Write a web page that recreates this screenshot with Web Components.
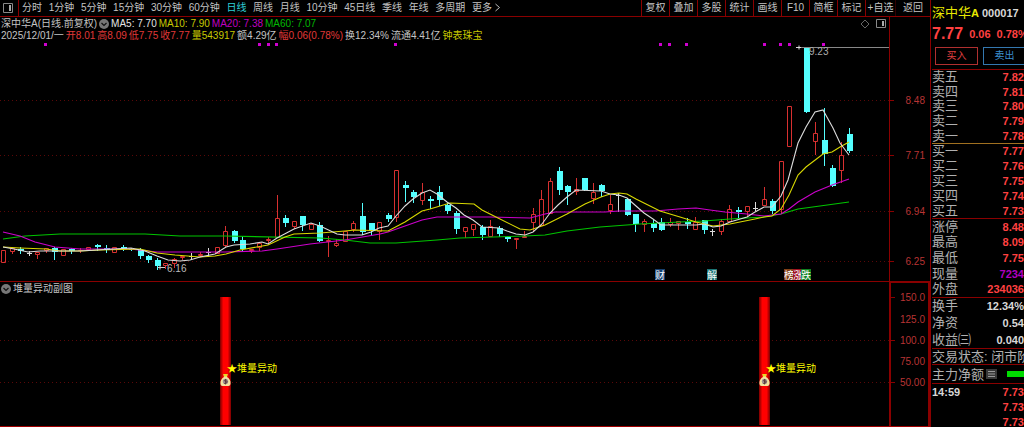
<!DOCTYPE html>
<html lang="zh-CN">
<head>
<meta charset="utf-8">
<title>深中华A 日线</title>
<style>
html,body{height:100%;margin:0;background:#000}
body{color:#c4c4c4;font:10px/12px "Liberation Sans","Noto Sans CJK SC",sans-serif;overflow:hidden}
</style>
</head>
<body>
<stock-app></stock-app>
<script>
const define = (name, html, setup) => customElements.define(name, class extends HTMLElement {
  connectedCallback() {
    if (this.shadowRoot) return;
    const t = document.createElement('template');
    t.innerHTML = html;
    this.attachShadow({mode: 'open'}).append(t.content.cloneNode(true));
    if (setup) setup(this, this.shadowRoot);
  }
});

/* ---------- toolbar ---------- */
define('period-tab', `<style>
:host{display:block}
button{all:unset;display:block;white-space:nowrap;cursor:pointer;color:inherit}
:host([active]){color:#2fd0d8}
</style><button type="button"><slot></slot></button>`);

define('tool-button', `<style>
:host{display:block;box-sizing:border-box;width:28px;border-left:1px solid #8a0000}
:host([wide]){width:30px}
:host([last]){width:35px;border-left-color:#300}
button{all:unset;display:block;width:100%;line-height:16px;text-align:center;white-space:nowrap;cursor:pointer}
</style><button type="button"><slot></slot></button>`);

define('top-bar', `<style>
:host{display:flex;justify-content:space-between;height:16px;line-height:16px;border-bottom:1px solid #8a0000}
.left,.right{display:flex}
.left{flex:0 1 500px}
.toggle{all:unset;box-sizing:border-box;display:flex;align-items:center;width:19px;flex:none;padding-left:3px;border-right:1px solid #8a0000}
nav{display:flex;justify-content:space-between;flex:1;padding-left:3px}
period-tab svg{vertical-align:-1px;margin-left:3px}
</style>
<div class="left"><button class="toggle" type="button" aria-label="侧栏"><svg width="11" height="10"><path d="M.5.5h9v9h-9z" fill="none" stroke="#888"/><path d="M6 2h2v6H6z" fill="#aaa"/></svg></button>
<nav><period-tab>分时</period-tab><period-tab>1分钟</period-tab><period-tab>5分钟</period-tab><period-tab>15分钟</period-tab><period-tab>30分钟</period-tab><period-tab>60分钟</period-tab><period-tab active>日线</period-tab><period-tab>周线</period-tab><period-tab>月线</period-tab><period-tab>10分钟</period-tab><period-tab>45日线</period-tab><period-tab>季线</period-tab><period-tab>年线</period-tab><period-tab>多周期</period-tab><period-tab>更多<svg width="5" height="9"><path d="M.5 1l4 3.500-4 3.500" fill="none" stroke="#bbb"/></svg></period-tab></nav></div>
<div class="right"><tool-button>复权</tool-button><tool-button>叠加</tool-button><tool-button>多股</tool-button><tool-button>统计</tool-button><tool-button>画线</tool-button><tool-button>F10</tool-button><tool-button>简框</tool-button><tool-button>标记</tool-button><tool-button wide>+自选</tool-button><tool-button last>返回</tool-button></div>`);

/* ---------- shared pieces ---------- */
define('round-toggle', `<style>:host{display:block;line-height:0}button{all:unset;display:block}</style>
<button type="button" aria-label="展开"><svg width="10" height="10"><circle cx="5" cy="5" r="5" fill="#777"/><path d="M2.500 4L5 6.500 7.500 4" fill="none" stroke="#111" stroke-width="1.200"/></svg></button>`);

define('value-axis', `<style>
:host{display:block;box-sizing:border-box;border-left:1px solid #8a0000;overflow:hidden}
:host([framed]){border:2px solid #8a0000;border-top-width:1px;border-bottom:0}
svg{display:block;width:100%;height:100%}
text{fill:#b83434}
</style><svg></svg>`, (el, root) => {
  const top = +el.getAttribute('top'), x = el.hasAttribute('framed') ? 34 : 35;
  root.querySelector('svg').innerHTML = el.getAttribute('marks').split(',').map(m => {
    const [label, y, tick] = m.split(':');
    return (tick ? `<path d="M0 ${y - top + .5}h4" stroke="#8a0000"/>` : '') +
      `<text x="${x}" y="${y - top + 4}" text-anchor="end">${label}</text>`;
  }).join('');
});

/* ---------- candles: [kind, high, top, bottom, low] ---------- */
const CANDLES = `r 250 250 262 262|r 247 248 251 253|c 247 249 251 253|w 251 253 253 255|r 252 252 254 258|r 248 248 250 252|c 247 248 252 259|r 249 249 255 255|c 248 249 251 253|r 248 250 250 252|r 247 247 249 249|c 244 245 247 250|c 245 248 250 252|r 247 247 252 252|c 245 247 249 250|c 248 249 250 250|c 248 250 256 258|c 255 256 260 262|c 258 260 266 269|r 263 263 265 268|r 258 259 263 267|r 256 256 257 259|w 253 256 256 259|r 252 254 255 256|w 248 252 252 256|r 247 247 253 253|r 226 231 245 246|c 230 231 241 242|c 236 240 249 251|r 249 249 250 252|r 243 243 247 250|r 237 239 240 242|r 195 218 237 237|c 215 218 223 226|r 221 221 226 228|c 216 216 225 230|r 223 224 229 229|c 222 225 241 241|r 236 240 241 256|r 239 243 245 246|r 231 231 241 241|r 221 223 229 231|c 203 216 232 234|c 223 223 231 235|r 222 222 231 239|c 213 215 219 221|r 170 170 217 221|c 181 185 188 201|c 190 192 197 202|r 183 192 200 204|c 196 199 201 208|c 186 192 200 205|c 203 205 211 213|c 211 213 229 233|r 227 227 231 237|r 224 224 229 235|c 225 227 235 239|r 220 226 236 236|c 226 228 234 236|c 236 237 239 241|r 238 238 239 248|r 231 236 237 237|r 208 214 222 231|r 190 199 225 225|r 178 181 213 213|c 167 171 190 194|c 185 186 192 204|r 178 189 191 194|c 178 178 190 190|r 183 192 198 203|c 184 185 191 196|r 195 204 210 213|w 193 195 195 211|c 199 199 215 215|c 214 214 224 231|r 219 221 224 231|c 220 223 228 231|c 218 222 230 230|r 218 222 224 226|r 221 221 223 229|c 218 222 224 228|r 217 222 229 229|c 220 220 230 233|w 229 231 231 235|r 219 221 231 234|r 205 209 221 221|c 207 210 212 217|r 206 206 211 215|w 202 208 208 210|r 187 199 205 205|c 199 201 211 213|r 161 161 209 213|r 106 106 146 146|w 47 47 47 47|c 47 47 112 112|r 122 133 141 154|c 108 140 154 165|c 165 168 186 186|r 142 155 170 182|c 128 134 151 152`.split('|').map(s => s.split(' '));

const AVERAGES = {
  '#00c400': '3,239 25,236 60,234 145,234 180,236 225,236 320,238 345,240 370,243 396,243 437,240 460,238 525,236 545,235 567,231 600,227 640,224 680,222 704,221 730,219 764,217 781,214 798,209 820,206 849,202',
  '#cc00cc': '3,232 20,236 35,242 55,247 80,249 130,249 157,252 225,252 262,251 277,249 310,244 345,240 380,234 388,232 405,226 422,220 437,217 490,217 530,218 545,214 555,212 605,212 619,211 655,211 678,209 696,208 710,210 725,212 747,214 764,216 781,214 789,209 798,202 815,192 832,185 849,179',
  '#d8d800': '3,247 20,248 46,249 60,251 80,251 100,250 140,249 157,253 175,255 200,257 215,256 226,254 240,250 268,245 285,237 294,234 320,233 345,231 355,230 388,231 405,222 422,211 430,209 450,203 474,204 482,210 500,219 520,229 530,230 545,225 567,214 585,204 601,197 610,194 619,193 627,194 636,199 660,211 680,217 696,222 713,226 730,224 755,219 764,217 772,216 781,209 789,195 798,175 806,167 823,154 832,152 840,147 849,142',
  '#dcdcdc': '3,247 14,249 28,252 40,251 80,251 97,250 131,248 145,251 157,256 168,260 180,261 190,260 200,257 215,254 226,247 234,245 250,244 262,242 268,244 277,238 294,229 311,223 320,226 337,234 345,235 362,235 371,232 379,228 388,226 396,216 405,206 413,199 422,193 430,190 437,194 447,202 456,208 464,215 473,220 482,227 499,228 507,231 516,234 525,235 533,232 542,224 550,213 558,205 567,197 576,190 601,191 610,194 619,195 627,198 636,206 644,213 653,219 661,225 696,225 704,224 713,227 721,226 730,222 747,217 755,212 764,207 772,207 781,196 788,180 798,143 806,127 815,112 823,110 833,128 840,143 849,155'
};
const dotted = (y) => `<path d="M0 ${y}.5H2000" stroke="#5a0808" stroke-dasharray="1 3"/>`;

define('candle-chart', `<style>
:host{display:block;min-width:0;overflow:hidden}
svg{display:block;width:100%;height:100%}
</style><svg><g transform="translate(0 -42)"></g></svg>`, (el, root) => {
  let out = [100, 155, 211, 261].map(dotted).join('');
  CANDLES.forEach(([kind, ...v], i) => {
    const [high, top, bottom, low] = v.map(Number);
    const x = Math.round(3 + i * 8.547);
    if (kind === 'w') {
      out += `<path d="M${x + .5} ${high}V${low + 1}M${x - 2} ${top + .5}h5" stroke="#ddd"/>`;
    } else if (kind === 'c') {
      out += `<path d="M${x + .5} ${high}V${low + 1}" stroke="#54ffff"/><rect x="${x - 2}" y="${top}" width="6" height="${Math.max(1, bottom - top)}" fill="#54ffff"/>`;
    } else {
      out += `<path d="M${x + .5} ${high}V${top}M${x + .5} ${bottom}V${low + 1}M${x - 1.5} ${top + .5}h4V${bottom + .5}h-4z" fill="none" stroke="#d83030"/>`;
    }
  });
  for (const [color, points] of Object.entries(AVERAGES))
    out += `<polyline points="${points}" fill="none" stroke="${color}" stroke-width="1.1"/>`;
  for (const x of [45, 259, 268, 276, 395, 660, 669, 686, 764, 780, 789, 823])
    out += `<rect x="${x - 1}" y="43" width="3" height="3" fill="#d000d0"/>`;
  out += `<path d="M800 47.500H2000" stroke="#888"/><path d="M796 47.500h5M799 45.500v4" stroke="#ddd"/>
    <text x="809" y="55" fill="#aaa">9.23</text>
    <path d="M158 267.500h7M160 265.500v4" stroke="#ccc"/><text x="167" y="272" fill="#bbb">6.16</text>`;
  for (const [x, ch, bg] of [[655, '财', '#17406f'], [707, '解', '#1c7474'], [784, '榜', '#824016'], [793, '涨', '#a01020'], [801, '跌', '#108020']])
    out += `<rect x="${x}" y="269" width="10" height="11" fill="${bg}"/><text x="${x}" y="279" fill="#fff">${ch}</text>`;
  root.querySelector('g').innerHTML = out;
});

define('signal-chart', `<style>
:host{display:block;min-width:0;overflow:hidden}
svg{display:block;width:100%;height:100%}
</style><svg><defs><linearGradient id="bar"><stop stop-color="#700"/><stop offset=".3" stop-color="#f00"/><stop offset=".7" stop-color="#f00"/><stop offset="1" stop-color="#700"/></linearGradient></defs><g transform="translate(0 -295)"></g></svg>`, (el, root) => {
  let out = dotted(340) + dotted(382);
  for (const x of [220, 759]) out += `<rect x="${x}" y="297" width="11" height="128" fill="url(#bar)"/>
    <g transform="translate(${x} 374)"><path d="M3.500 0h4L7 3C9.500 4.500 11 7 10.500 10q-.3 2-2 2h-6q-2 0-2-2C0 7 1.500 4.500 4 3z" fill="#f3e3a0"/><path d="M3.500 0h4L7 2.500H4z" fill="#e8d820"/><circle cx="5.500" cy="7.500" r="2.700" fill="#a09090"/><path d="M6.800 6.200q-2.500-.8-2.300.4t1.900.7.1 1.700-2.200.2M5.500 5v5" fill="none" stroke="#533" stroke-width=".8"/></g>
    <text x="${x + 7}" y="372" fill="#ff0">★堆量异动</text>`;
  root.querySelector('g').innerHTML = out;
});

/* ---------- panes ---------- */
define('price-pane', `<style>
:host{display:grid;grid-template-columns:minmax(0,1fr) 41px;grid-template-rows:25px 1fr;border-bottom:1px solid #8a0000}
header{padding:1px 0 0 1px;white-space:nowrap}
.line{display:flex;height:12px;align-items:center;gap:2px}
.tools{margin-left:auto;padding-right:3px;display:flex;gap:6px}
.r{color:#e03838}.y{color:#c8c800}.m{color:#c000c0}.g{color:#00b800}.w{color:#e4e4e4}
value-axis{grid-column:2;grid-row:1/3}
</style>
<header><div class="line"><span>深中华A(日线.前复权)</span><round-toggle></round-toggle><span class="w">MA5: 7.70</span><span class="y">MA10: 7.90</span><span class="m">MA20: 7.38</span><span class="g">MA60: 7.07</span>
<span class="tools"><svg width="10" height="10"><path d="M5 1l4 4-4 4-4-4z" fill="none" stroke="#666"/></svg><svg width="10" height="10"><path d="M.5.5h9v8h-9z" fill="none" stroke="#888"/><path d="M6 2h2v5H6z" fill="#aaa"/></svg></span></div>
<div class="line"><span>2025/12/01/一</span><span class="r">开8.01</span><span class="r">高8.09</span><span class="r">低7.75</span><span class="r">收7.77</span><span class="y">量543917</span><span>额4.29亿</span><span class="r">幅0.06(0.78%)</span><span>换12.34%</span><span>流通4.41亿</span><span class="y">钟表珠宝</span></div></header>
<candle-chart></candle-chart>
<value-axis top="17" marks="8.48:100:1,7.71:155:1,6.94:211:1,6.25:261:1"></value-axis>`);

define('signal-pane', `<style>
:host{display:grid;grid-template-columns:minmax(0,1fr) 41px;grid-template-rows:13px 1fr;border-bottom:1px solid #a00000}
header{display:flex;align-items:center;gap:2px;padding-left:1px}
value-axis{grid-column:2;grid-row:1/3}
</style>
<header><round-toggle></round-toggle><span>堆量异动副图</span></header>
<signal-chart></signal-chart>
<value-axis framed top="283" marks="150.0:297:1,125.0:319,100.0:340:1,75.00:361,50.00:382:1"></value-axis>`);

/* ---------- quote side panel ---------- */
define('quote-row', `<style>
:host{display:flex;align-items:center;justify-content:space-between;font-size:13px;line-height:14px;white-space:nowrap;min-height:0;color:#b0b0b0}
b{font-size:11px;color:#ff4040}
:host([tone=plain]) b{color:#d8d8d8}
:host([tone=violet]) b{color:#b000c0}
.time{font-size:11px;font-weight:bold;color:#d8d8d8}
</style><span></span><b><slot></slot></b>`, (el, root) => {
  const s = root.querySelector('span');
  s.textContent = el.getAttribute('label') || '';
  if (el.hasAttribute('time')) s.className = 'time';
});

define('quote-panel', `<style>
:host{display:flex;flex-direction:column;box-sizing:border-box;border-left:1px solid #8a0000;overflow:hidden;padding-left:1px;white-space:nowrap}
:host>*,.name,.price,.trade,section{flex:none}
.name{display:flex;align-items:center;gap:3px;height:16px;padding-top:5px;color:#e8e800;font-size:13px}
.name b{color:#d8d8d8;font-size:11px}
.price{display:flex;align-items:center;gap:6px;height:25px;color:#ff4040;font-size:11px;font-weight:bold}
.price strong{font-size:16px}
.trade{display:flex;gap:5px;padding:1px 0 4px 3px}
.trade button{flex:none;box-sizing:border-box;width:43px;height:18px;padding:0;background:#000;font:inherit;color:#e04040;border:1px solid #b03030}
.trade .sell{color:#3c90d0;border-color:#3478b0}
section{display:grid;grid-auto-rows:1fr;box-sizing:border-box;border-top:1px solid #8a0000}
.ask{height:74px}.bid{height:75px;border-color:#a07020}.day{height:79px}.fund{height:51px}
.state,.flow{display:flex;align-items:center;font-size:13px;line-height:15px;color:#b0b0b0}
.state{height:16px}.flow{height:19px;gap:2px}
.flow svg{flex:none}
.flow i{flex:none;width:20px;height:6px;margin-left:8px;background:#00dc00}
.ticks{grid-auto-rows:15px}
</style>
<div class="name"><span>深中华<b style="color:inherit">A</b></span><b>000017</b></div>
<div class="price"><strong>7.77</strong><span>0.06</span><span>0.78%</span></div>
<div class="trade"><button type="button">买入</button><button type="button" class="sell">卖出</button></div>
<section class="ask"><quote-row label="卖五">7.82</quote-row><quote-row label="卖四">7.81</quote-row><quote-row label="卖三">7.80</quote-row><quote-row label="卖二">7.79</quote-row><quote-row label="卖一">7.78</quote-row></section>
<section class="bid"><quote-row label="买一">7.77</quote-row><quote-row label="买二">7.76</quote-row><quote-row label="买三">7.75</quote-row><quote-row label="买四">7.74</quote-row><quote-row label="买五">7.73</quote-row></section>
<section class="day"><quote-row label="涨停">8.48</quote-row><quote-row label="最高">8.09</quote-row><quote-row label="最低">7.75</quote-row><quote-row label="现量" tone="violet">7234</quote-row><quote-row label="外盘">234036</quote-row></section>
<section class="fund"><quote-row label="换手" tone="plain">12.34%</quote-row><quote-row label="净资" tone="plain">0.54</quote-row><quote-row label="收益㈢" tone="plain">0.040</quote-row></section>
<section class="state">交易状态: 闭市阶</section>
<section class="flow"><span>主力净额</span><svg width="11" height="10"><path d="M0 0h11v10H0z" fill="#383838"/><path d="M2 2.500h7M2 5h7M2 7.500h7" stroke="#999"/></svg><i></i></section>
<section class="ticks"><quote-row label="14:59" time>7.73</quote-row><quote-row>7.73</quote-row><quote-row>7.73</quote-row></section>`);

define('stock-app', `<style>
:host{display:grid;grid-template-columns:minmax(0,1fr) 94px;height:100%}
main{display:grid;grid-template-rows:17px 265px minmax(0,1fr);min-width:0;min-height:0}
quote-panel{min-height:0}
</style>
<main><top-bar></top-bar><price-pane></price-pane><signal-pane></signal-pane></main>
<quote-panel></quote-panel>`);
</script>
</body>
</html>
